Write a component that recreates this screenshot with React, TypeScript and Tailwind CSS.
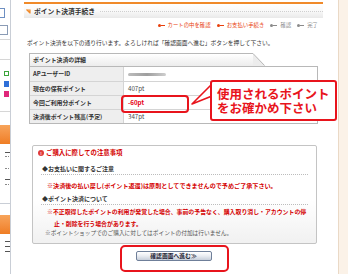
import React from "react"

const rows = [
  { label: "APユーザーID", value: "", blur: true },
  { label: "現在の保有ポイント", value: "407pt" },
  { label: "今回ご利用分ポイント", value: "-60pt", red: true },
  { label: "決済後ポイント残高(予定)", value: "347pt" },
]

const steps = [
  { label: "カートの中を確認", on: true },
  { label: "お支払い手続き", on: true },
  { label: "確認", on: false },
  { label: "完了", on: false },
]

function Sidebar() {
  return (
    <div className="flex w-[11px] shrink-0 flex-col border-r border-[#c9ced6] bg-white">
      <div className="mt-[8px] h-[10px] w-[5px] border border-l-0 border-[#6d8fc2]" />
      <div className="mt-[7px] h-[10px] w-[8px] border border-l-0 border-[#8a9bb5]" />
      <div className="mt-[4px] h-px w-full bg-[#d6d6d6]" />
      <div className="mt-[19px] h-px w-full bg-[#d6d6d6]" />
      <div className="mt-[11px] ml-[4px] h-[5px] w-[5px] border border-[#3aa43a]" />
      <div className="mt-[5px] ml-[4px] h-[6px] w-[5px] bg-[#2f6fd8]" />
      <div className="mt-[4px] ml-[4px] h-[6px] w-[5px] bg-[#e0287a]" />
      <div className="mt-[14px] h-px w-full bg-[#d6d6d6]" />
      <div className="mt-[13px] h-[19px] w-full bg-gradient-to-b from-[#f7a45a] to-[#ef7d22]" />
      <div className="mt-[8px] ml-[5px] h-px w-[5px] bg-[#555]" />
      <div className="mt-[3px] ml-[5px] h-px w-[4px] border-t border-dotted border-[#888]" />
      <div className="mt-[11px] ml-[5px] h-px w-[4px] border-t border-dotted border-[#888]" />
      <div className="mt-[10px] ml-[5px] h-px w-[5px] bg-[#555]" />
      <div className="mt-[4px] ml-[5px] h-px w-[4px] border-t border-dotted border-[#888]" />
      <div className="mt-[18px] h-px w-full bg-[#c9ced6]" />
      <div className="mt-[11px] h-[19px] w-full bg-gradient-to-b from-[#f7a45a] to-[#ef7d22]" />
      <div className="mt-[7px] ml-[5px] h-px w-[5px] bg-[#555]" />
      <div className="mt-[4px] ml-[5px] h-px w-[5px] bg-[#555]" />
      <div className="mt-[4px] ml-[5px] h-px w-[5px] bg-[#555]" />
    </div>
  )
}

function Callout() {
  return (
    <div className="absolute left-[186px] top-[80px] h-[42px] w-[152px]">
      <svg className="absolute left-0 top-0" width="30" height="42" viewBox="0 0 30 42">
        <path d="M 26 4 L 6 24 L 26 16 Z" fill="#fff" stroke="#e8141c" strokeWidth="1.6" strokeLinejoin="round" />
      </svg>
      <div className="absolute left-[24px] top-0 flex h-[41px] w-[127px] flex-col justify-center rounded-[3px] border-2 border-[#e8141c] bg-white pl-[5px] text-[12.5px] font-bold leading-[14px] text-[#e8141c]">
        <span>使用されるポイント</span>
        <span>をお確かめ下さい</span>
      </div>
    </div>
  )
}

export default function App() {
  return (
    <div className="relative flex h-[274px] w-[348px] overflow-hidden bg-white font-['Noto_Sans_CJK_JP','Liberation_Sans',sans-serif] text-[#333]">
      <Sidebar />

      <div className="ml-[13px] flex w-[299px] shrink-0 flex-col">
        <div className="mt-[2px] h-[2px] w-full bg-[#f08a2a]" />
        <div className="flex h-[14px] items-center gap-[3px] bg-gradient-to-b from-white via-[#f9f9f9] to-[#e9e9e9] pl-[2px]">
          <svg width="5" height="5" viewBox="0 0 5 5">
            <path d="M0.5 1 L4 1 L4 4.5 M0.5 0.5 L4 4" stroke="#f08a2a" strokeWidth="1.2" fill="none" />
          </svg>
          <span className="text-[6.8px] font-bold leading-none text-[#333]">ポイント決済手続き</span>
          <div className="ml-[2px] flex-1 border-t border-dotted border-[#cfcfcf]" />
        </div>

        <div className="mt-[5px] flex justify-end gap-[6px] pr-[5px] text-[5.4px] leading-none">
          {steps.map((s) => (
            <div key={s.label} className={`flex items-center gap-[3px] ${s.on ? "text-[#e8400c]" : "text-[#8a8a8a]"}`}>
              <span className="flex items-center">
                <span className={`h-[3px] w-[3px] rounded-full ${s.on ? "bg-[#e8400c]" : "bg-[#8a8a8a]"}`} />
                <span className={`h-px w-[4px] ${s.on ? "bg-[#e8400c]" : "bg-[#8a8a8a]"}`} />
              </span>
              <span>{s.label}</span>
            </div>
          ))}
        </div>

        <p className="mt-[12px] pl-[3px] text-[5.75px] leading-none whitespace-nowrap text-[#333]">
          ポイント決済を以下の通り行います。よろしければ「確認画面へ進む」ボタンを押して下さい。
        </p>

        <div className="ml-[5px] mt-[7px] w-[289px]">
          <div className="flex h-[13px]">
            <div className="flex w-[224px] items-center border-l border-t border-[#b8b8b8] bg-gradient-to-b from-white to-[#ececec] pl-[3px] text-[5.9px] font-bold leading-none">
              ポイント決済の詳細
            </div>
            <svg width="12" height="13" viewBox="0 0 12 13">
              <path d="M0 0.5 L0 13 L12 13 L12 12.5 Z" fill="#ececec" />
              <path d="M0 0.5 L11.5 12.5" stroke="#b8b8b8" strokeWidth="1" />
            </svg>
          </div>
          <div className="border border-[#b8b8b8] bg-white">
            {rows.map((r, i) => (
              <div key={r.label} className={`flex h-[14px] ${i > 0 ? "border-t border-[#d4d4d4]" : ""}`}>
                <div className="flex w-[94px] items-center border-r border-[#d4d4d4] bg-[#eeeeee] pl-[3px] text-[5.9px] font-bold leading-none text-[#333]">
                  {r.label}
                </div>
                <div className="flex flex-1 items-center pl-[4px] text-[6.2px] leading-none">
                  {r.blur ? (
                    <div className="h-[3px] w-[38px] rounded-full bg-gradient-to-r from-[#bdbdbd] via-[#9e9e9e] to-[#cfcfcf] blur-[0.6px]" />
                  ) : (
                    <span className={r.red ? "font-bold text-[#e60012]" : "text-[#444]"}>{r.value}</span>
                  )}
                </div>
              </div>
            ))}
          </div>
        </div>

        <div className="ml-[8px] mt-[21px] w-[285px] rounded-[2px] border border-[#c4c4c4] bg-gradient-to-b from-white from-55% to-[#f1f1f1]">
          <div className="flex items-center gap-[2px] pl-[5px] pt-[4px] text-[6.4px] font-bold leading-none text-[#d40000]">
            <span className="flex h-[6px] w-[6px] items-center justify-center rounded-full bg-[#e03a3a] text-[4px] text-white">!</span>
            <span>ご購入に際しての注意事項</span>
          </div>
          <div className="mx-[8px] mt-[9px] border-b border-dotted border-[#bcbcbc] pb-[2px] pl-[1px] text-[6px] font-bold leading-none text-[#333]">
            ◆お支払いに関するご注意
          </div>
          <p className="mt-[8px] pl-[14px] text-[6.1px] font-bold leading-none whitespace-nowrap text-[#d40000]">
            ※決済後の払い戻し(ポイント返還)は原則としてできませんので予めご了承下さい。
          </p>
          <div className="mx-[8px] mt-[7px] border-b border-dotted border-[#bcbcbc] pb-[2px] pl-[1px] text-[6px] font-bold leading-none text-[#333]">
            ◆ポイント決済について
          </div>
          <p className="mt-[1px] pr-[2px] pl-[21px] text-[5.9px] font-bold leading-[12px] text-[#d40000] [text-indent:-7px]">
            ※不正取得したポイントの利用が発覚した場合、事前の予告なく、購入取り消し・アカウントの停止・削除を行う場合があります。
          </p>
          <p className="pb-[8px] pl-[12px] text-[5.7px] leading-none whitespace-nowrap text-[#555]">
            ※ポイントショップでのご購入に対してはポイントの付加は行いません。
          </p>
        </div>

        <div className="mt-[7px] flex justify-center">
          <button className="flex h-[10px] w-[76px] items-center justify-center rounded-[2px] border border-[#6f7f99] bg-gradient-to-b from-white via-[#e9ecf1] to-[#c7ceda] text-[5.8px] font-bold leading-none text-[#223]">
            確認画面へ進む≫
          </button>
        </div>
      </div>

      <div className="ml-[15px] flex-1 border-l border-[#ead9c6] bg-[#fbf2e8]" />

      <div className="absolute left-[121px] top-[95px] h-[18px] w-[68px] rounded-[4px] border-2 border-[#e8141c]" />
      <Callout />
      <div className="absolute left-[120px] top-[245px] h-[27px] w-[109px] rounded-[5px] border-2 border-[#e8141c]" />
    </div>
  )
}
